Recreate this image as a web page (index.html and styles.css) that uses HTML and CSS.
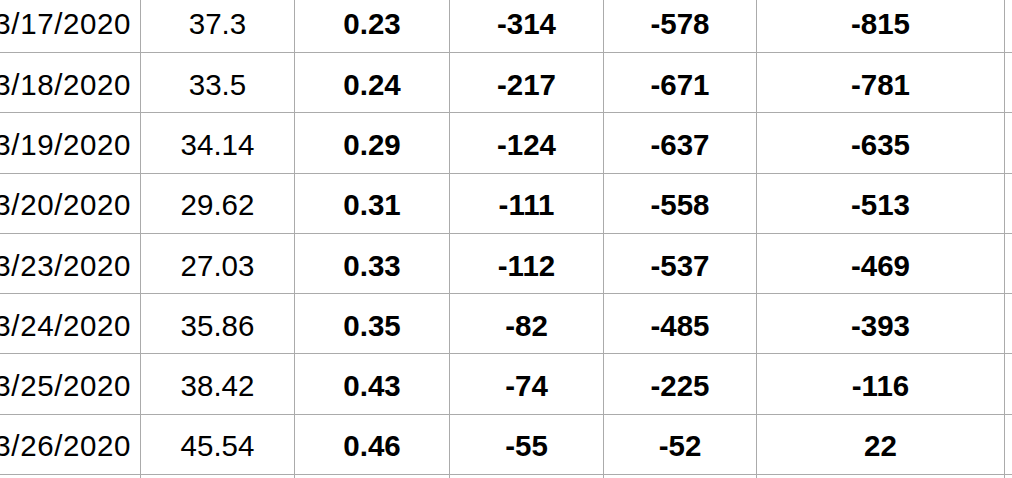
FILE: index.html
```html
<!DOCTYPE html>
<html lang="en">
<head>
<meta charset="utf-8">
<title>Sheet</title>
<link rel="stylesheet" href="styles.css">
</head>
<body>
<div class="viewport">
  <div class="sheet">
    <div class="cell date">3/17/2020</div><div class="cell">37.3</div><div class="cell b">0.23</div><div class="cell b">-314</div><div class="cell b">-578</div><div class="cell b">-815</div><div class="cell"></div>
    <div class="cell date">3/18/2020</div><div class="cell">33.5</div><div class="cell b">0.24</div><div class="cell b">-217</div><div class="cell b">-671</div><div class="cell b">-781</div><div class="cell"></div>
    <div class="cell date">3/19/2020</div><div class="cell">34.14</div><div class="cell b">0.29</div><div class="cell b">-124</div><div class="cell b">-637</div><div class="cell b">-635</div><div class="cell"></div>
    <div class="cell date">3/20/2020</div><div class="cell">29.62</div><div class="cell b">0.31</div><div class="cell b">-111</div><div class="cell b">-558</div><div class="cell b">-513</div><div class="cell"></div>
    <div class="cell date">3/23/2020</div><div class="cell">27.03</div><div class="cell b">0.33</div><div class="cell b">-112</div><div class="cell b">-537</div><div class="cell b">-469</div><div class="cell"></div>
    <div class="cell date">3/24/2020</div><div class="cell">35.86</div><div class="cell b">0.35</div><div class="cell b">-82</div><div class="cell b">-485</div><div class="cell b">-393</div><div class="cell"></div>
    <div class="cell date">3/25/2020</div><div class="cell">38.42</div><div class="cell b">0.43</div><div class="cell b">-74</div><div class="cell b">-225</div><div class="cell b">-116</div><div class="cell"></div>
    <div class="cell date">3/26/2020</div><div class="cell">45.54</div><div class="cell b">0.46</div><div class="cell b">-55</div><div class="cell b">-52</div><div class="cell b">22</div><div class="cell"></div>
    <div class="cell date"></div><div class="cell"></div><div class="cell b"></div><div class="cell b"></div><div class="cell b"></div><div class="cell b"></div><div class="cell"></div>
  </div>
</div>
</body>
</html>
```

FILE: styles.css
```css
html, body {
  margin: 0;
  padding: 0;
  background: #ffffff;
}

.viewport {
  width: 1012px;
  height: 478px;
  overflow: hidden;
}

.sheet {
  display: grid;
  grid-template-columns: 161px 154px 155px 154px 153px 248px 60px;
  grid-auto-rows: 60.3px;
  margin-top: -7.3px;
  margin-left: -20px;
  font-family: "Liberation Sans", Arial, Helvetica, sans-serif;
  font-size: 29.5px;
  color: #000000;
}

.cell {
  box-sizing: border-box;
  display: flex;
  align-items: center;
  justify-content: center;
  padding-top: 4px;
  border-right: 1px solid #ababab;
  border-bottom: 1px solid #ababab;
  white-space: nowrap;
  overflow: visible;
}

.date {
  justify-content: flex-end;
  padding-right: 9px;
  letter-spacing: 0.6px;
}

.b {
  font-weight: 700;
}
```
